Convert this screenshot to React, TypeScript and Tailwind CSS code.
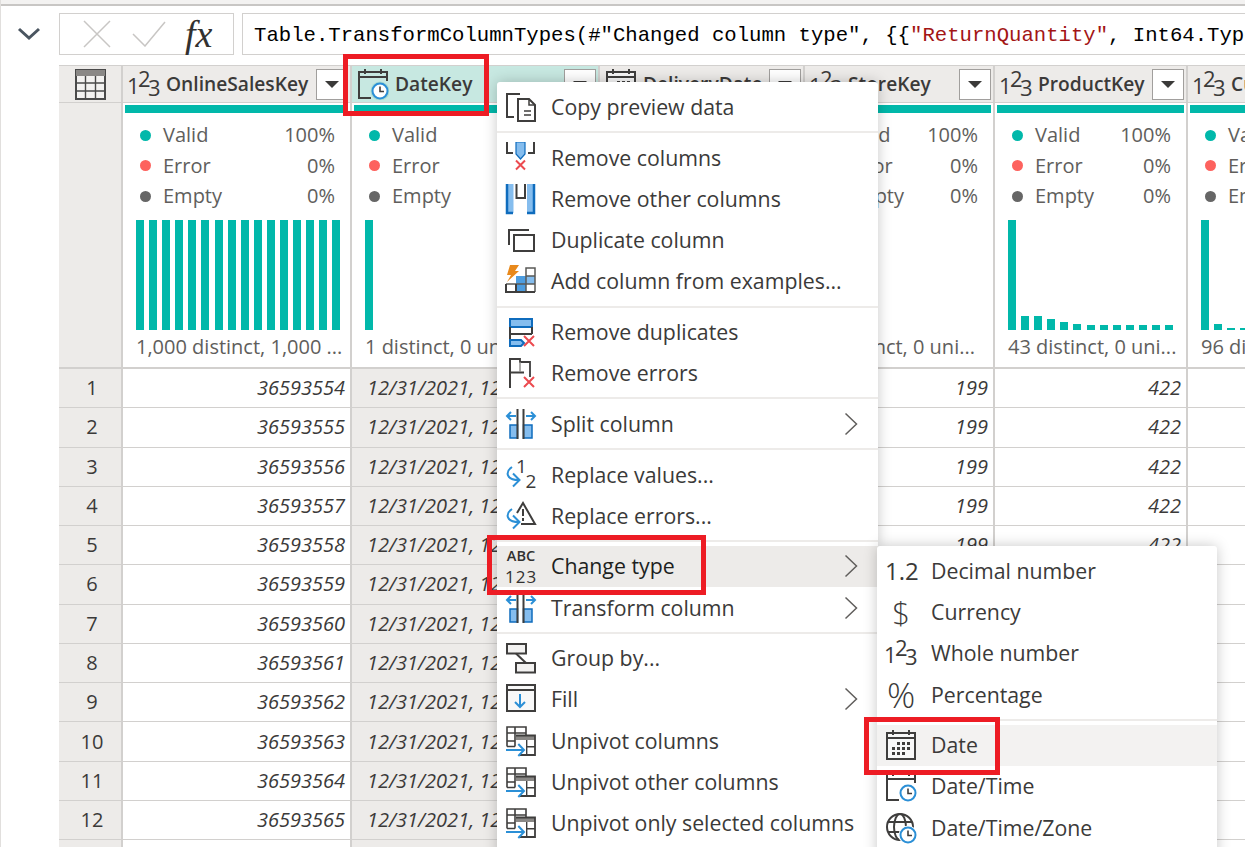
import type { ReactNode } from "react";

const COLS = "grid grid-cols-[64px_229px_248px_205px_190px_193px_240px]";
const DARK = "#3f3e3d";
const BLUE = "#0f6cbd";
const LIGHT = "#85bdee";
const SKY = "#2b8fd6";
const RED = "#ec4a4f";

function Svg({ children, size = 32 }: { children: ReactNode; size?: number }) {
  return (
    <svg width={size} height={size} viewBox="0 0 32 32" fill="none" className="shrink-0">
      {children}
    </svg>
  );
}

function Int123() {
  return (
    <Svg>
      <g fontFamily="Open Sans" fontWeight="400" fontSize="22" fill="#3b3a39">
        <text x="-1" y="26">1</text>
        <text x="10" y="19">2</text>
        <text x="20" y="28">3</text>
      </g>
    </Svg>
  );
}

function ClockBadge({ halo = "#ffffff" }: { halo?: string }) {
  return (
    <>
      <circle cx="23" cy="23" r="9.5" fill={halo} />
      <circle cx="23" cy="23" r="7.5" fill="white" stroke={SKY} strokeWidth="2" />
      <path d="M23 18.5V23.5H27" stroke={DARK} strokeWidth="1.6" />
    </>
  );
}

function DateTimeIcon({ halo }: { halo?: string }) {
  return (
    <Svg>
      <path d="M14 30H2V4H30V13" stroke={DARK} strokeWidth="2" />
      <path d="M2 9H30" stroke={DARK} strokeWidth="2" />
      <path d="M8 1V6M24 1V6" stroke={DARK} strokeWidth="2" />
      <ClockBadge halo={halo} />
    </Svg>
  );
}

function DateIcon() {
  return (
    <Svg>
      <rect x="2" y="4" width="28" height="26" fill="#f8f8f8" stroke={DARK} strokeWidth="2" />
      <path d="M2 9H30M8 1V6M24 1V6" stroke={DARK} strokeWidth="2" />
      <path
        d="M12 13h3v3h-3zM17 13h3v3h-3zM22 13h3v3h-3zM7 18h3v3H7zM12 18h3v3h-3zM17 18h3v3h-3zM22 18h3v3h-3zM7 23h3v3H7zM12 23h3v3h-3zM17 23h3v3h-3z"
        fill={DARK}
      />
    </Svg>
  );
}

function ZoneIcon() {
  return (
    <Svg>
      <circle cx="15" cy="15" r="13" stroke={DARK} strokeWidth="2" />
      <ellipse cx="15" cy="15" rx="6" ry="13" stroke={DARK} strokeWidth="2" />
      <path d="M3 10H27M3 20H27" stroke={DARK} strokeWidth="2" />
      <ClockBadge />
    </Svg>
  );
}

function RedX({ x, y, r = 5 }: { x: number; y: number; r?: number }) {
  return <path d={`M${x - r} ${y - r}L${x + r} ${y + r}M${x + r} ${y - r}L${x - r} ${y + r}`} stroke={RED} strokeWidth="2" />;
}

function SplitIcon() {
  return (
    <Svg>
      <rect x="5" y="17" width="7.5" height="13" fill={LIGHT} stroke={BLUE} strokeWidth="1.5" />
      <rect x="18.5" y="17" width="8.5" height="13" fill={LIGHT} stroke={BLUE} strokeWidth="1.5" />
      <path d="M12.5 1V31M18.5 1V31" stroke={DARK} strokeWidth="2" />
      <path d="M11 8H2M6 4L2 8L6 12M21 8H30M26 4L30 8L26 12" stroke={SKY} strokeWidth="2" />
    </Svg>
  );
}

function ReplaceArrow() {
  return <path d="M7 9C0 14 1 22 14 22M8 15.5L14.5 22L8 28.5" stroke={SKY} strokeWidth="2" fill="none" />;
}

function UnpivotIcon() {
  return (
    <Svg>
      <path d="M2 21.5V2H21V10M2 8H21M2 16H10M10 2V21.5M2 21.5H10" stroke={DARK} strokeWidth="1.6" />
      <rect x="11" y="10.5" width="19" height="4.5" fill="#8a8886" />
      <path d="M11 10.5H30V30H15" stroke={DARK} strokeWidth="1.8" />
      <path d="M21.7 15V30M21.7 21.7H30" stroke={DARK} strokeWidth="1.4" />
      <path d="M1 25H18M13.3 19L19 25L13.3 31" stroke={SKY} strokeWidth="2" />
    </Svg>
  );
}

const ICONS: Record<string, ReactNode> = {
  copy: (
    <Svg>
      <path d="M15 3H2V26H9" stroke={DARK} strokeWidth="2" />
      <path d="M13 8H24L30 14V30H13Z" stroke={DARK} strokeWidth="2" fill="white" />
      <path d="M24 8V14H30M19 20H26M19 24H26" stroke={DARK} strokeWidth="1.5" />
    </Svg>
  ),
  removeCols: (
    <Svg>
      <path d="M2 0V11H8M29 0V11H23" stroke={DARK} strokeWidth="2" />
      <path d="M11 0H20V12L15.5 17L11 12Z" fill={LIGHT} stroke={BLUE} strokeWidth="1.2" />
      <RedX x={15.5} y={23} r={4.5} />
    </Svg>
  ),
  removeOther: (
    <Svg>
      <path d="M2 1H8.5V30H2Z" fill={LIGHT} />
      <path d="M22 1H29V30H22Z" fill={LIGHT} />
      <path d="M2 1V30H8M29 1V30H22" stroke={BLUE} strokeWidth="2.5" />
      <path d="M11.5 1V15H20V1" stroke={DARK} strokeWidth="2" />
    </Svg>
  ),
  duplicate: (
    <Svg>
      <path d="M24 6H4V21" stroke={DARK} strokeWidth="2" />
      <rect x="9" y="11" width="20" height="16" stroke={DARK} strokeWidth="2" fill="white" />
    </Svg>
  ),
  addExamples: (
    <Svg>
      <rect x="11" y="11" width="10" height="16" fill="#4d9de0" />
      <rect x="21" y="11" width="9" height="8" fill={LIGHT} />
      <path d="M30 27V3H21V27M21 11H30M1 19H30" stroke="#5a5957" strokeWidth="1.5" />
      <path d="M1 19V27H30M11 19V27" stroke={DARK} strokeWidth="2" />
      <path d="M5 0H14L10 6H14L2 17L6 10H2Z" fill="#e8891c" />
    </Svg>
  ),
  removeDup: (
    <Svg>
      <rect x="5" y="3" width="22" height="8" fill={LIGHT} stroke={BLUE} strokeWidth="2" />
      <path d="M27 11V18M5 11V24" stroke={DARK} strokeWidth="2" />
      <path d="M5 18H27" stroke={DARK} strokeWidth="2" />
      <path d="M5 24H16L19 27L16 30H5Z" fill={LIGHT} stroke={BLUE} strokeWidth="2" />
      <RedX x={24} y={25} r={5} />
    </Svg>
  ),
  removeErr: (
    <Svg>
      <path d="M5 1V31" stroke={DARK} strokeWidth="2" />
      <path d="M5 2H15V5H25V20M5 15.5H19" stroke={DARK} strokeWidth="1.8" />
      <path d="M15 5V15" stroke="#8a8886" strokeWidth="1.4" />
      <RedX x={24} y={25} r={5} />
    </Svg>
  ),
  split: <SplitIcon />,
  replaceVals: (
    <Svg>
      <g fontFamily="Open Sans" fontSize="19" fill="#3b3a39" fontWeight="400">
        <text x="11" y="15">1</text>
        <text x="20.5" y="30">2</text>
      </g>
      <ReplaceArrow />
    </Svg>
  ),
  replaceErrs: (
    <Svg>
      <path d="M12 13L18 3L30 24H16" stroke={DARK} strokeWidth="2" fill="none" />
      <path d="M18 9V16M18 18V21" stroke={DARK} strokeWidth="2" />
      <ReplaceArrow />
    </Svg>
  ),
  changeType: (
    <div className="w-[32px] text-center leading-none text-[#323130]">
      <div className="text-[14.5px] font-semibold leading-[20px]">ABC</div>
      <div className="text-[17px] font-normal leading-[21px] tracking-[1px]">123</div>
    </div>
  ),
  group: (
    <Svg>
      <rect x="2" y="2" width="19" height="9.5" fill="#f3f2f1" stroke={DARK} strokeWidth="2" />
      <rect x="11" y="21" width="19" height="9.5" fill="#f3f2f1" stroke={DARK} strokeWidth="2" />
      <path d="M11 11.5L21 21" stroke={DARK} strokeWidth="2" />
    </Svg>
  ),
  fill: (
    <Svg>
      <rect x="2" y="2" width="28" height="26" fill="#f8f8f8" stroke={DARK} strokeWidth="2" />
      <path d="M2 7H30" stroke={DARK} strokeWidth="2" />
      <path d="M15 11V24M10 19L15 24L20 19" stroke={SKY} strokeWidth="2" />
    </Svg>
  ),
  unpivot: <UnpivotIcon />,
  decimal: <span className="text-[24px] font-normal text-[#3b3a39] leading-none">1.2</span>,
  currency: <span className="w-[32px] text-center text-[31px] font-light text-[#3b3a39] leading-none">$</span>,
  whole: <Int123 />,
  percent: <span className="w-[32px] text-center text-[35px] font-light text-[#3b3a39] leading-none">%</span>,
  date: <DateIcon />,
  dateTime: <DateTimeIcon />,
  zone: <ZoneIcon />,
};

type MenuEntry = { label: string; icon: string; arrow?: boolean; hover?: string; dark?: boolean } | "sep";

const MAIN_MENU: MenuEntry[] = [
  { label: "Copy preview data", icon: "copy" },
  "sep",
  { label: "Remove columns", icon: "removeCols" },
  { label: "Remove other columns", icon: "removeOther" },
  { label: "Duplicate column", icon: "duplicate" },
  { label: "Add column from examples...", icon: "addExamples" },
  "sep",
  { label: "Remove duplicates", icon: "removeDup" },
  { label: "Remove errors", icon: "removeErr" },
  "sep",
  { label: "Split column", icon: "split", arrow: true },
  "sep",
  { label: "Replace values...", icon: "replaceVals" },
  { label: "Replace errors...", icon: "replaceErrs" },
  "sep",
  { label: "Change type", icon: "changeType", arrow: true, hover: "bg-[#edebe9]", dark: true },
  { label: "Transform column", icon: "split", arrow: true },
  "sep",
  { label: "Group by...", icon: "group" },
  { label: "Fill", icon: "fill", arrow: true },
  { label: "Unpivot columns", icon: "unpivot" },
  { label: "Unpivot other columns", icon: "unpivot" },
  { label: "Unpivot only selected columns", icon: "unpivot" },
];

const TYPE_MENU: MenuEntry[] = [
  { label: "Decimal number", icon: "decimal" },
  { label: "Currency", icon: "currency" },
  { label: "Whole number", icon: "whole" },
  { label: "Percentage", icon: "percent" },
  "sep",
  { label: "Date", icon: "date", hover: "bg-[#f3f2f1]" },
  { label: "Date/Time", icon: "dateTime" },
  { label: "Date/Time/Zone", icon: "zone" },
];

function MenuList({ items }: { items: MenuEntry[] }) {
  return (
    <div className="pt-[4.4px]">
      {items.map((item, i) =>
        item === "sep" ? (
          <div key={i} className="h-[9.5px] flex items-center">
            <div className="h-[2px] w-full bg-[#edebe9]" />
          </div>
        ) : (
          <div key={i} className={`h-[41.2px] flex items-center pl-[8px] pr-[20px] ${item.hover ?? ""}`}>
            <div className="w-[46px] shrink-0 flex items-center">{ICONS[item.icon]}</div>
            <span className={`flex-1 whitespace-nowrap text-[21.3px] ${item.dark ? "text-[#201f1e]" : "text-[#3b3a39]"}`}>
              {item.label}
            </span>
            {item.arrow && (
              <svg width="14" height="24" viewBox="0 0 14 24" fill="none">
                <path d="M1.5 1.5L12.5 12L1.5 22.5" stroke="#605e5c" strokeWidth="1.5" />
              </svg>
            )}
          </div>
        ),
      )}
    </div>
  );
}

function HeaderCell({ icon, name, active }: { icon: ReactNode; name: string; active?: boolean }) {
  return (
    <div className={`flex items-center pl-[3px] pr-[2px] border-r-2 border-[#d2d0ce] ${active ? "bg-[#c7e8e1]" : ""}`}>
      <div className="ml-[2px] w-[38px] shrink-0 flex">{icon}</div>
      <span className="flex-1 truncate text-[19.2px] font-semibold text-[#3b3a39]">{name}</span>
      <div className="w-[32px] h-[31px] shrink-0 bg-white border border-[#a19f9d] flex items-center justify-center">
        <div className="w-0 h-0 border-x-[7px] border-x-transparent border-t-[7px] border-t-[#3b3a39]" />
      </div>
    </div>
  );
}

function StatRow({ color, label, pct }: { color: string; label: string; pct: string }) {
  return (
    <div className="h-[30.5px] flex items-center pl-[17px] pr-[15px] text-[20px] text-[#605e5c]">
      <div className={`w-[11px] h-[11px] rounded-full shrink-0 ${color}`} />
      <span className="ml-[12px] flex-1 whitespace-nowrap">{label}</span>
      <span>{pct}</span>
    </div>
  );
}

function ProfileCell({ bars, footer }: { bars: number[]; footer: string }) {
  return (
    <div className="h-[264px] border-r-2 border-[#d2d0ce] px-[2px] pt-[2px] overflow-hidden">
      <div className="h-[8px] bg-[#01b8aa]" />
      <div className="mt-[7px] -mx-[2px]">
        <StatRow color="bg-[#01b8aa]" label="Valid" pct="100%" />
        <StatRow color="bg-[#fd625e]" label="Error" pct="0%" />
        <StatRow color="bg-[#666666]" label="Empty" pct="0%" />
      </div>
      <div className="mt-[8.5px] ml-[11px] h-[110px] flex items-end gap-[5.1px]">
        {bars.map((h, i) => (
          <div key={i} className="w-[8px] shrink-0 bg-[#01b8aa]" style={{ height: h }} />
        ))}
      </div>
      <div className="mt-[2px] ml-[11px] h-[30px] flex items-center whitespace-nowrap text-[20px] text-[#605e5c]">{footer}</div>
    </div>
  );
}

const rows = Array.from({ length: 13 }, (_, i) => i);
const cellBase = "border-r-2 border-[#d2d0ce] flex items-center italic text-[20px] text-[#3b3a39] overflow-hidden whitespace-nowrap";

export default function App() {
  return (
    <div className="relative w-[1245px] h-[847px] overflow-hidden bg-white font-['Open_Sans',sans-serif] border-l border-[#e1dfdd]">
      <div className="h-[6px] bg-[#f3f2f1] border-b-2 border-[#c8c6c4]" />

      <div className="flex h-[42px] mt-[7px]">
        <div className="w-[58px] flex items-center justify-center pr-[2px]">
          <svg width="24" height="14" viewBox="0 0 24 14" fill="none">
            <path d="M2 2L12 11L22 2" stroke="#4a5560" strokeWidth="3" />
          </svg>
        </div>
        <div className="w-[175px] border border-[#d2d0ce] flex items-center">
          <svg width="30" height="28" viewBox="0 0 30 28" fill="none" className="ml-[22px]">
            <path d="M2 1L28 27M28 1L2 27" stroke="#c8c6c4" strokeWidth="1.5" />
          </svg>
          <svg width="34" height="26" viewBox="0 0 34 26" fill="none" className="ml-[20px]">
            <path d="M1 13L13 25L33 1" stroke="#c8c6c4" strokeWidth="1.5" />
          </svg>
          <span className="ml-[19px] font-['Liberation_Serif',serif] italic text-[38px] leading-none text-[#323130]">fx</span>
        </div>
        <div className="ml-[8px] flex-1 min-w-0 border border-[#d2d0ce] border-r-0 flex items-center pl-[11px] pt-[4px] overflow-hidden whitespace-nowrap font-['Liberation_Mono',monospace] text-[20.63px] text-black">
          <span>
            Table.TransformColumnTypes(#"Changed column type", {"{{"}
            <span className="text-[#a31515]">"ReturnQuantity"</span>, Int64.Type{"}}"})
          </span>
        </div>
      </div>

      <div className="mt-[10px] ml-[58px]">
        <div className={`${COLS} h-[38px] bg-[#edebe9] border-y border-[#d2d0ce]`}>
          <div className="border-r-2 border-[#d2d0ce] flex items-center justify-center pl-[1px]">
            <svg width="31" height="31" viewBox="0 0 31 31" fill="none">
              <rect x="1" y="1" width="29" height="29" stroke="#4a4a4a" strokeWidth="2" fill="#f3f2f1" />
              <rect x="1" y="1" width="29" height="6" fill="#8a8886" />
              <path d="M1 14H30M1 22H30M10.5 7V30M20.5 7V30" stroke="#4a4a4a" strokeWidth="1.4" />
            </svg>
          </div>
          <HeaderCell icon={<Int123 />} name="OnlineSalesKey" />
          <HeaderCell icon={<DateTimeIcon halo="#a9dcd2" />} name="DateKey" active />
          <HeaderCell icon={<DateIcon />} name="DeliveryDate" />
          <HeaderCell icon={<Int123 />} name="StoreKey" />
          <HeaderCell icon={<Int123 />} name="ProductKey" />
          <HeaderCell icon={<Int123 />} name="CustomerKey" />
        </div>

        <div className={`${COLS} border-b-2 border-[#d2d0ce]`}>
          <div className="bg-[#edebe9] border-r-2 border-[#d2d0ce]" />
          <ProfileCell bars={Array(16).fill(110)} footer="1,000 distinct, 1,000 ..." />
          <ProfileCell bars={[110]} footer="1 distinct, 0 unique" />
          <ProfileCell bars={[110]} footer="1 distinct, 0 unique" />
          <ProfileCell bars={[110, 60, 40, 20]} footer="7 distinct, 0 uni..." />
          <ProfileCell bars={[110, 14, 14, 11, 8, 6.5, 5.5, 5.5, 5.5, 5.5, 5.5, 5.5, 5.5]} footer="43 distinct, 0 uni..." />
          <ProfileCell bars={[110, 6, 2, 2]} footer="96 distinct, 0 uni..." />
        </div>

        {rows.map((i) => (
          <div key={i} className={`${COLS} h-[39.27px] border-b border-[#d2d0ce]`}>
            <div className="bg-[#edebe9] border-r-2 border-[#d2d0ce] flex items-center justify-center pl-[4px] text-[20px] text-[#3b3a39]">{i + 1}</div>
            <div className={`${cellBase} justify-end pr-[5px]`}>{36593554 + i}</div>
            <div className={`${cellBase} bg-[#edebe9] pl-[15px]`}>12/31/2021, 12:00:00 AM</div>
            <div className={`${cellBase} pl-[15px]`}>1/5/2022</div>
            <div className={`${cellBase} justify-end pr-[5px]`}>199</div>
            <div className={`${cellBase} justify-end pr-[5px]`}>422</div>
            <div className={cellBase} />
          </div>
        ))}
      </div>

      <div className="absolute left-[496px] top-[82px] w-[381px] h-[780px] bg-white rounded-[3px] shadow-[0_0_14px_rgba(0,0,0,0.22)]">
        <MenuList items={MAIN_MENU} />
      </div>
      <div className="absolute left-[876px] top-[546px] w-[340px] h-[320px] bg-white rounded-[3px] shadow-[0_0_14px_rgba(0,0,0,0.22)]">
        <MenuList items={TYPE_MENU} />
      </div>

      <div className="absolute left-[342px] top-[54px] w-[146px] h-[62px] border-[5px] border-[#ed1c24]" />
      <div className="absolute left-[486px] top-[535px] w-[219px] h-[60px] border-[5px] border-[#ed1c24]" />
      <div className="absolute left-[863px] top-[717px] w-[136px] h-[58px] border-[5px] border-[#ed1c24]" />
    </div>
  );
}
